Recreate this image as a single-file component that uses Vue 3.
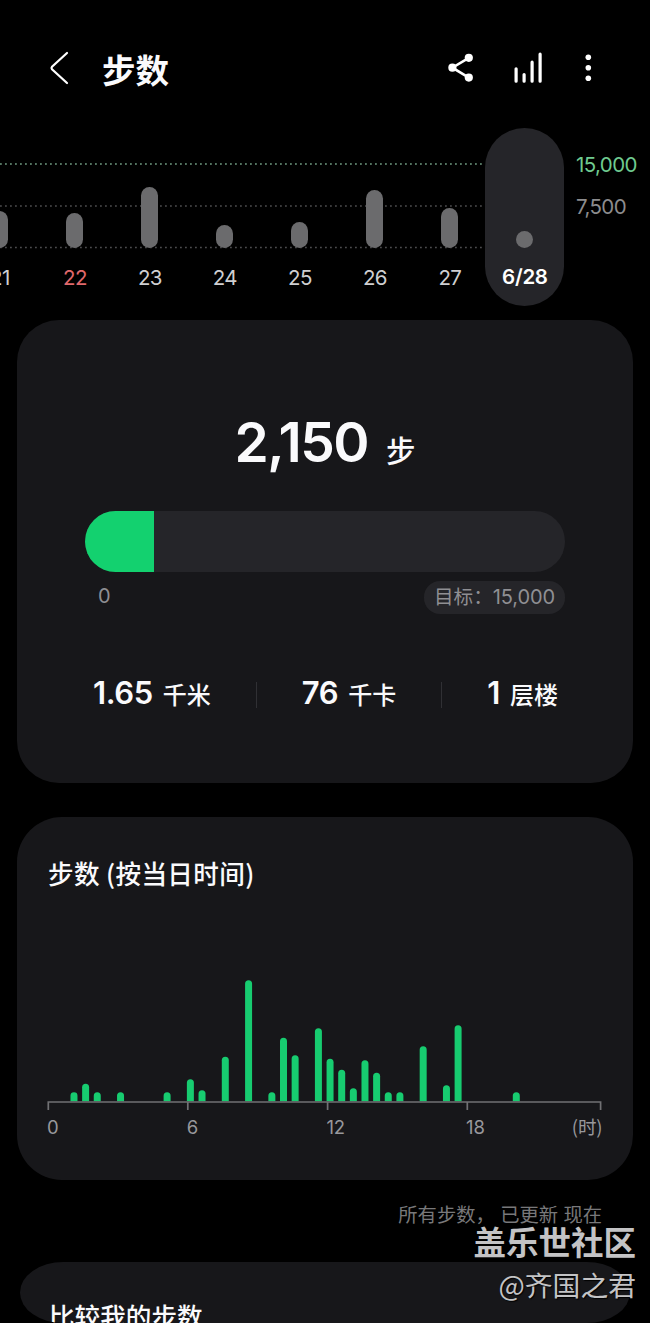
<template>
  <div class="steps-page">
    <!-- Top bar -->
    <header class="top-bar">
      <svg class="back-icon" width="24" height="36" viewBox="0 0 24 36">
        <path d="M19 3 L4 16.8 Q3 18 4 19.2 L19 33" />
      </svg>
      <h1 class="page-title">步数</h1>
      <div class="actions">
        <svg width="28" height="32" viewBox="0 0 28 32">
          <path class="share-line" d="M20.8 5.8 L4.4 15.7 L20.8 25.6" />
          <circle cx="20.8" cy="5.8" r="4.1" />
          <circle cx="4.4" cy="15.7" r="4.1" />
          <circle cx="20.8" cy="25.6" r="4.1" />
        </svg>
        <svg width="32" height="32" viewBox="0 0 32 32">
          <path class="bars-line" d="M3.1 16.8 V29.2 M11.1 22.6 V29.2 M19.1 10.2 V29.2 M27.1 2.2 V29.2" />
        </svg>
        <svg width="12" height="32" viewBox="0 0 12 32">
          <circle cx="6.3" cy="5.3" r="2.8" />
          <circle cx="6.3" cy="15.8" r="2.8" />
          <circle cx="6.3" cy="26.3" r="2.8" />
        </svg>
      </div>
    </header>

    <!-- Daily history -->
    <section class="history">
      <svg class="grid-lines" width="484" height="178">
        <line class="goal" x1="0" x2="484" y1="36" y2="36" />
        <line x1="0" x2="484" y1="78" y2="78" />
        <line x1="0" x2="484" y1="119.5" y2="119.5" />
      </svg>
      <div class="days">
        <div
          v-for="day in days"
          :key="day.label"
          class="day"
          :class="{ holiday: day.holiday, selected: day.selected }"
        >
          <div class="day-track">
            <div class="day-bar" :style="{ height: day.height + 'px' }"></div>
          </div>
          <span class="day-label">{{ day.label }}</span>
        </div>
      </div>
      <div class="scale">
        <span class="scale-goal">15,000</span>
        <span>7,500</span>
      </div>
    </section>

    <!-- Today summary -->
    <section class="card summary">
      <div class="total">
        <span class="total-value">2,150</span>
        <span class="total-unit">步</span>
      </div>
      <div class="progress">
        <div class="progress-fill" :style="{ width: progress + '%' }"></div>
      </div>
      <div class="progress-labels">
        <span class="zero">0</span>
        <span class="target">目标：<b>15,000</b></span>
      </div>
      <div class="stats">
        <template v-for="(stat, index) in stats" :key="stat.unit">
          <i v-if="index > 0" class="divider"></i>
          <div class="stat">
            <span class="stat-value">{{ stat.value }}</span>
            <span class="stat-unit">{{ stat.unit }}</span>
          </div>
        </template>
      </div>
    </section>

    <!-- Steps per half hour -->
    <section class="card hourly">
      <h2 class="card-title hourly-title">步数 (按当日时间)</h2>
      <svg class="hourly-chart" width="556" height="134" viewBox="0 0 556 134">
        <path
          v-for="bar in hourly"
          :key="bar[0]"
          class="hour-bar"
          :d="barPath(bar[0], bar[1])"
        />
        <path class="axis" d="M2.3 132 V124 H554.6 V132 M141.8 124 V132 M281.6 124 V132 M421.3 124 V132" />
      </svg>
      <div class="hours">
        <span v-for="hour in hours" :key="hour" class="hour">{{ hour }}</span>
        <span class="hour-unit">(时)</span>
      </div>
    </section>

    <p class="updated">所有步数， 已更新 现在</p>

    <section class="compare">
      <h2 class="card-title">比较我的步数</h2>
    </section>

    <div class="watermark">
      <strong>盖乐世社区</strong>
      <span>@齐国之君</span>
    </div>
  </div>
</template>

<script setup>
const days = [
  { label: '21', height: 37 },
  { label: '22', height: 35, holiday: true },
  { label: '23', height: 61 },
  { label: '24', height: 23 },
  { label: '25', height: 26 },
  { label: '26', height: 58 },
  { label: '27', height: 40.5 },
  { label: '6/28', height: 17, selected: true }
]

const progress = 14.4

const stats = [
  { value: '1.65', unit: '千米' },
  { value: '76', unit: '千卡' },
  { value: '1', unit: '层楼' }
]

// [half hour slot, bar height]
const hourly = [
  [2, 9], [3, 17.5], [4, 9], [6, 9], [10, 9], [12, 22], [13, 11],
  [15, 44.5], [17, 121], [19, 9], [20, 63.5], [21, 46], [23, 73],
  [24, 42.5], [25, 31.5], [26, 13], [27, 41], [28, 28.5], [29, 9],
  [30, 9], [32, 55], [34, 16], [35, 76], [40, 9]
]

const hours = [0, 6, 12, 18]

// Rounded top, flat bottom sitting on the axis
const barPath = (slot, height) => {
  const x = 1.2 + slot * 11.64
  const top = 123.3 - height
  return `M${x} 123.3 V${top + 3.5} a3.5 3.5 0 0 1 7 0 V123.3 Z`
}
</script>

<style>
body {
  margin: 0;
  background: #000;
}
</style>

<style scoped>
.steps-page {
  position: relative;
  box-sizing: border-box;
  width: 650px;
  height: 1323px;
  overflow: hidden;
  background: #000;
  color: #fafafc;
  font-family: Inter, "Noto Sans CJK SC", sans-serif;
}

.top-bar {
  display: flex;
  align-items: center;
  height: 128px;
  padding: 8px 56px 0 48px;
  box-sizing: border-box;
}

.back-icon {
  fill: none;
  stroke: #fff;
  stroke-width: 2.2;
  stroke-linecap: round;
}

.page-title {
  margin: 2px 0 0 30px;
  font-family: "Noto Sans CJK SC", sans-serif;
  font-size: 33.5px;
  font-weight: 700;
  line-height: 40px;
}

.actions {
  display: flex;
  align-items: center;
  gap: 37px;
  margin-left: auto;
  fill: #fff;
}

.share-line,
.bars-line {
  fill: none;
  stroke: #fff;
  stroke-width: 2.6;
}

.bars-line {
  stroke-width: 3.2;
  stroke-linecap: round;
}

.history {
  position: relative;
  display: flex;
  height: 178px;
}

.grid-lines {
  position: absolute;
  top: 0;
  left: 0;
}

.grid-lines line {
  stroke: #4c4c4e;
  stroke-width: 1.6;
  stroke-dasharray: 1.8 3.2;
}

.grid-lines .goal {
  stroke: #6f9a80;
}

.days {
  position: relative;
  display: flex;
  margin-left: -37.6px;
}

.day {
  display: flex;
  flex-direction: column;
  align-items: center;
  width: 75px;
  height: 178px;
}

.day-track {
  display: flex;
  align-items: flex-end;
  height: 120px;
}

.day-bar {
  width: 17px;
  border-radius: 9px;
  background: #6b6b6d;
}

.day-label {
  margin-top: 17px;
  font-size: 20.5px;
  line-height: 26px;
  letter-spacing: -0.6px;
  color: #cfcfd1;
}

.holiday .day-label {
  color: #e0696c;
}

.selected {
  width: 79px;
  margin-left: -2px;
  border-radius: 40px;
  background: #252529;
}

.selected .day-label {
  margin-top: 16px;
  font-weight: 600;
  letter-spacing: -0.3px;
  color: #fff;
}

.scale {
  display: flex;
  flex-direction: column;
  gap: 16px;
  margin: 24px 0 0 11.6px;
  font-size: 20.5px;
  line-height: 26px;
  letter-spacing: -0.6px;
  color: #8c8c8e;
}

.scale-goal {
  color: #6fcb90;
}

.card {
  box-sizing: border-box;
  margin: 0 17px;
  background: #17171a;
}

.summary {
  height: 463px;
  margin-top: 14px;
  padding: 92px 68px 0;
  border-radius: 42px;
}

.total {
  display: flex;
  justify-content: center;
  align-items: baseline;
  gap: 18px;
  height: 99px;
  line-height: 60px;
}

.total-value {
  font-size: 55px;
  font-weight: 600;
  letter-spacing: -1.5px;
}

.total-unit {
  font-size: 29.5px;
  font-weight: 500;
}

.progress {
  height: 61px;
  overflow: hidden;
  border-radius: 31px;
  background: #252529;
}

.progress-fill {
  height: 100%;
  background: #13d16f;
}

.progress-labels {
  display: flex;
  justify-content: space-between;
  margin-top: 9px;
  padding-left: 13px;
  font-size: 20px;
  line-height: 32px;
  color: #8f8f93;
}

.zero {
  line-height: 30px;
}

.target {
  padding: 0 10px;
  border-radius: 16px;
  background: #252529;
  font-size: 19.6px;
  line-height: 33px;
}

.target b {
  font-weight: 400;
  font-size: 20px;
  letter-spacing: -0.1px;
}

.stats {
  display: flex;
  justify-content: space-between;
  align-items: center;
  margin: 61px 7px 0 8px;
}

.stat {
  display: flex;
  align-items: baseline;
  gap: 10px;
  line-height: 36px;
}

.stat-value {
  font-size: 31px;
  font-weight: 600;
  letter-spacing: -0.4px;
}

.stat-unit {
  font-size: 24px;
  font-weight: 500;
}

.divider {
  width: 1px;
  height: 26px;
  background: #303034;
}

.hourly {
  height: 363px;
  margin-top: 34px;
  padding: 38px 30px 0;
  border-radius: 45px;
}

.card-title {
  margin: 0 0 0 1px;
  font-family: "Noto Sans CJK SC", sans-serif;
  font-size: 25.6px;
  font-weight: 500;
  line-height: 36px;
}

.hourly-title {
  letter-spacing: 0.35px;
}

.hourly-chart {
  display: block;
  margin: 87px 0 0 -1px;
}

.hour-bar {
  fill: #17cc70;
}

.axis {
  fill: none;
  stroke: #717174;
  stroke-width: 1.7;
}

.hours {
  display: flex;
  height: 30px;
  font-size: 18.5px;
  line-height: 31px;
  letter-spacing: -0.1px;
  color: #98989c;
}

.hour {
  width: 139.7px;
}

.hour-unit {
  margin-left: -34px;
  font-family: "Noto Sans CJK SC", sans-serif;
  line-height: 28px;
}

.updated {
  margin: 21px 48px 0 0;
  font-size: 19.3px;
  line-height: 28px;
  text-align: right;
  color: #78787a;
}

.compare {
  box-sizing: border-box;
  height: 61px;
  margin: 33px 20px 0;
  padding: 36px 28px 0;
  overflow: hidden;
  border-radius: 44px / 31px;
  background: #17171a;
}

.watermark {
  position: absolute;
  right: 14px;
  bottom: 18px;
  display: flex;
  flex-direction: column;
  align-items: flex-end;
  font-family: "Noto Sans CJK SC", sans-serif;
  color: #c3c3c5;
  text-shadow: 1px 1px 1px #000;
}

.watermark strong {
  font-size: 32.5px;
  line-height: 44px;
}

.watermark span {
  font-size: 27.8px;
  line-height: 42px;
}
</style>
